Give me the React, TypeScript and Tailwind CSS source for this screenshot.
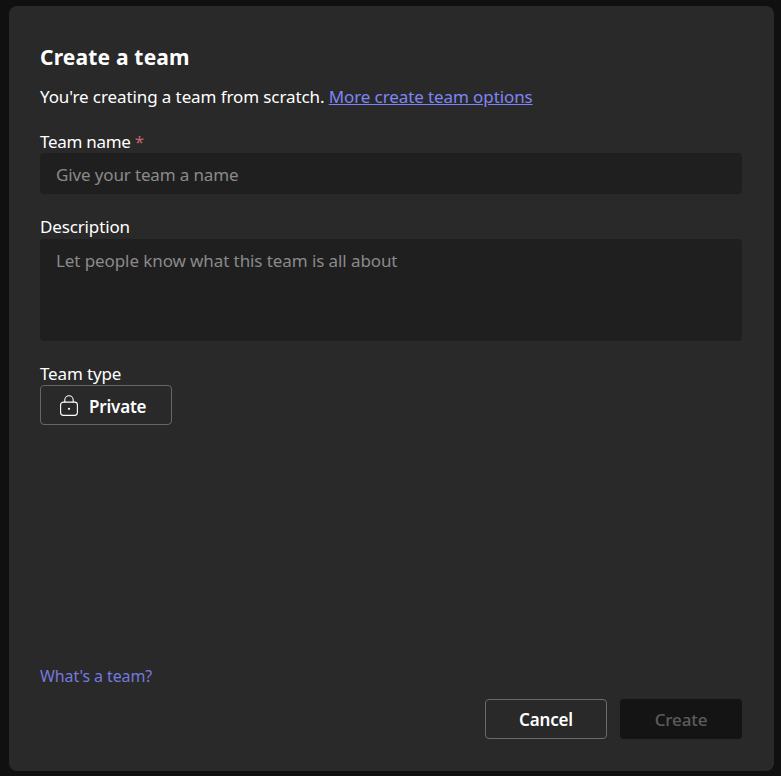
const FONT = "font-['Noto_Sans','Open_Sans',sans-serif]";

function LockIcon() {
  return (
    <svg width="18" height="21" viewBox="0 0 18 21" fill="none" stroke="currentColor" strokeWidth="1.1">
      <path d="M4.8 7.5V5a4.2 4.2 0 0 1 8.4 0v2.5" />
      <rect x="0.6" y="7.1" width="16.8" height="13.3" rx="2.8" />
      <circle cx="9" cy="13.8" r="1.1" fill="currentColor" stroke="none" />
    </svg>
  );
}

export default function App() {
  return (
    <div className={`${FONT} h-[776px] w-[781px] overflow-hidden bg-[#101010] pl-[9px] pt-[6px] text-white`}>
      <div className="flex h-[765px] w-[765px] flex-col rounded-[8px] bg-[#292929] pb-[32px] pl-[31px] pr-[32px] pt-[37px]">
        <h1 className="text-[21px] font-bold leading-[28px] tracking-[0.18px]">Create a team</h1>

        <p className="mt-[15px] text-[17px] leading-[22px] tracking-[-0.1px]">
          You're creating a team from scratch.{' '}
          <a className="text-[#7f85f5] underline">More create team options</a>
        </p>

        <label className="mt-[23px] block text-[17px] leading-[22px] tracking-[-0.3px]">
          Team name <span className="text-[#c4666e]">*</span>
        </label>
        <input
          readOnly
          placeholder="Give your team a name"
          className="h-[41px] w-full rounded-[4px] bg-[#1f1f1f] px-[16px] pt-[2px] text-[17px] tracking-[-0.14px] outline-none placeholder:text-[#8a8a8a]"
        />

        <label className="mt-[22px] block text-[17px] leading-[22px] tracking-[-0.14px]">Description</label>
        <textarea
          readOnly
          placeholder="Let people know what this team is all about"
          className="mt-[1px] h-[102px] w-full resize-none rounded-[4px] bg-[#1f1f1f] px-[16px] py-[11px] text-[17px] leading-[22px] tracking-[-0.09px] outline-none placeholder:text-[#8a8a8a]"
        />

        <label className="mt-[22px] block text-[17px] leading-[22px] tracking-[-0.14px]">Team type</label>
        <button
          type="button"
          className="flex h-[40px] w-[132px] items-center gap-[11px] rounded-[4px] border border-[#666666] pl-[19px] text-[17px] font-semibold tracking-[-0.2px]"
        >
          <LockIcon />
          <span className="pt-[3px]">Private</span>
        </button>

        <div className="mt-auto">
          <a className="block text-[16px] leading-[20px] tracking-[-0.1px] text-[#7479dc]">What's a team?</a>
          <div className="mt-[13px] flex justify-end gap-[13px]">
            <button
              type="button"
              className="h-[40px] w-[122px] rounded-[4px] border border-[#6b6b6b] pt-[2px] text-[17px] font-semibold tracking-[-0.14px]"
            >
              Cancel
            </button>
            <button
              type="button"
              className="h-[40px] w-[122px] rounded-[4px] bg-[#141414] pt-[2px] text-[17px] font-medium tracking-[-0.14px] text-[#5c5c5c]"
            >
              Create
            </button>
          </div>
        </div>
      </div>
    </div>
  );
}
